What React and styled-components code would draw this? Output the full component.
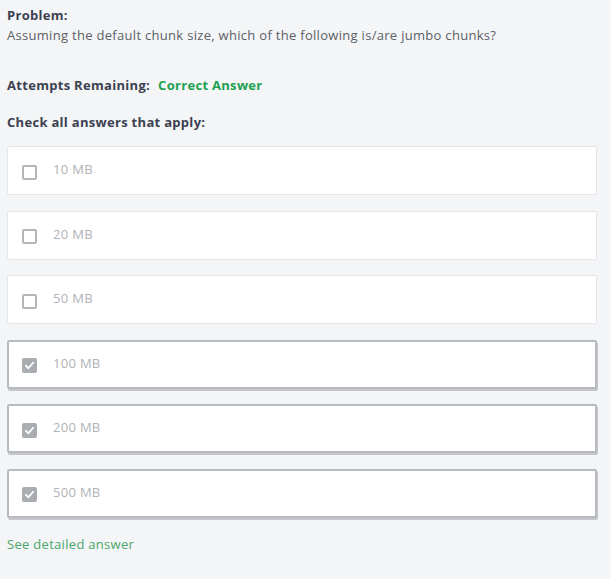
import React from 'react';
import styled, { createGlobalStyle } from 'styled-components';

const GlobalStyle = createGlobalStyle`
  html, body {
    margin: 0;
    padding: 0;
    background: #f4f5f7;
  }
  body {
    font-family: "Open Sans", "Liberation Sans", sans-serif;
  }
`;

const Page = styled.div`
  padding: 6px 14px 20px 7px;
  color: #3b4151;
`;

const Heading = styled.div`
  font-size: 13px;
  font-weight: 700;
  letter-spacing: 0.3px;
  color: #3b4151;
  line-height: 18px;
`;

const Question = styled.div`
  font-size: 13px;
  letter-spacing: 0.3px;
  color: #5b5f66;
  line-height: 18px;
  margin-top: 2px;
`;

const Attempts = styled.div`
  display: flex;
  gap: 8px;
  margin-top: 32px;
  font-size: 13px;
  font-weight: 700;
  letter-spacing: 0.3px;
  line-height: 18px;
`;

const Green = styled.span`
  color: #21a150;
`;

const Instruction = styled(Heading)`
  margin-top: 19px;
`;

const Options = styled.div`
  display: flex;
  flex-direction: column;
  gap: 15.5px;
  margin-top: 15px;
`;

const Option = styled.label`
  display: flex;
  align-items: center;
  gap: 16px;
  box-sizing: border-box;
  height: 49px;
  padding: 3px 0 0 14px;
  background: #fff;
  border: ${p => (p.$checked ? '2px solid #b7babe' : '1px solid #e4e6e9')};
  box-shadow: ${p => (p.$checked ? '1px 2px 0 #c4c6ca' : 'none')};
  border-radius: 2px;
`;

const Box = styled.span`
  display: flex;
  align-items: center;
  justify-content: center;
  box-sizing: border-box;
  width: 15px;
  height: 15px;
  border-radius: 2px;
  border: 2px solid ${p => (p.$checked ? '#a9acb1' : '#b3b5b9')};
  background: ${p => (p.$checked ? '#a9acb1' : '#fff')};
  margin-left: ${p => (p.$checked ? '-1px' : '0')};
`;

const Label = styled.span`
  font-size: 13px;
  letter-spacing: 0.3px;
  color: #b0b3b7;
  margin-top: -6px;
`;

const Link = styled.div`
  margin-top: 17px;
  font-size: 13px;
  letter-spacing: 0.3px;
  color: #4aa66a;
`;

const options = [
  { label: '10 MB', checked: false },
  { label: '20 MB', checked: false },
  { label: '50 MB', checked: false },
  { label: '100 MB', checked: true },
  { label: '200 MB', checked: true },
  { label: '500 MB', checked: true },
];

const Check = () => (
  <svg width="11" height="11" viewBox="0 0 12 12">
    <path d="M2 6.3 L4.8 9 L10 3" fill="none" stroke="#fff" strokeWidth="2" strokeLinecap="round" strokeLinejoin="round" />
  </svg>
);

export default function App() {
  return (
    <>
      <GlobalStyle />
      <Page>
        <Heading>Problem:</Heading>
        <Question>Assuming the default chunk size, which of the following is/are jumbo chunks?</Question>
        <Attempts>
          <span>Attempts Remaining:</span>
          <Green>Correct Answer</Green>
        </Attempts>
        <Instruction>Check all answers that apply:</Instruction>
        <Options>
          {options.map(o => (
            <Option key={o.label} $checked={o.checked}>
              <Box $checked={o.checked}>{o.checked && <Check />}</Box>
              <Label>{o.label}</Label>
            </Option>
          ))}
        </Options>
        <Link>See detailed answer</Link>
      </Page>
    </>
  );
}
